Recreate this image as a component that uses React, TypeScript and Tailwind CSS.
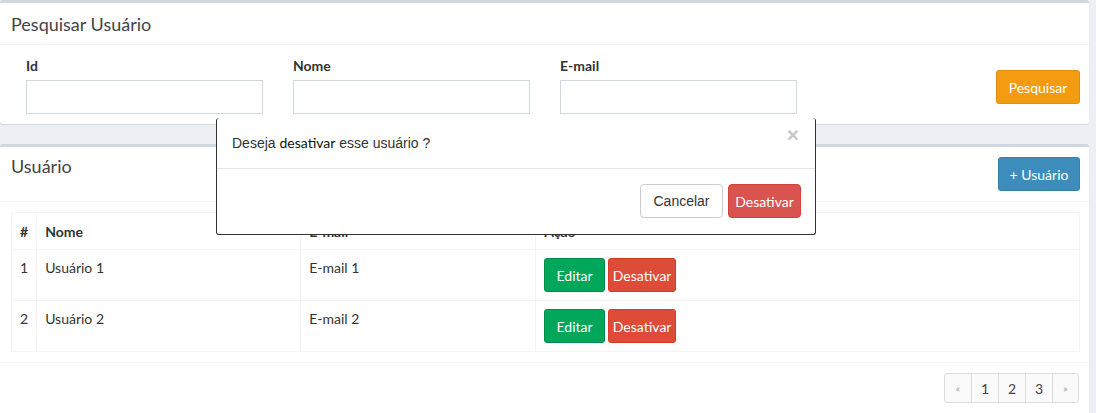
import React from 'react'

type User = {
  id: number
  nome: string
  email: string
}

const users: User[] = [
  { id: 1, nome: 'Usuário 1', email: 'E-mail 1' },
  { id: 2, nome: 'Usuário 2', email: 'E-mail 2' },
]

const sans = "font-['Lato','Noto_Sans',sans-serif]"
const arial = "font-['Liberation_Sans',Arial,sans-serif]"

function Field({ label }: { label: string }) {
  return (
    <div className="flex w-[237px] flex-col">
      <label className="mb-[4px] h-[20px] text-[14px] font-bold leading-[20px] text-[#333]">{label}</label>
      <input className="h-[34px] w-full border border-[#d2d6de] bg-white px-3 outline-none" />
    </div>
  )
}

export default function App() {
  return (
    <div className={`relative h-[413px] w-[1096px] overflow-hidden bg-[#ecf0f5] ${sans}`}>
      <div className="w-[1089px]">
        {/* pesquisa */}
        <div className="rounded-[3px] border-t-[3px] border-[#d2d6de] bg-white shadow-[0_1px_1px_rgba(0,0,0,0.1)]">
          <div className="flex h-[42px] items-center border-b border-[#f4f4f4] px-[11px]">
            <h3 className="text-[18px] leading-none text-[#444]">Pesquisar Usuário</h3>
          </div>
          <div className="flex h-[79px] items-start pl-[26px] pr-[9px] pt-[11px]">
            <div className="flex gap-[30px]">
              <Field label="Id" />
              <Field label="Nome" />
              <Field label="E-mail" />
            </div>
            <button className="ml-auto mt-[14px] h-[34px] w-[84px] rounded-[3px] border border-[#e08e0b] bg-[#f39c12] text-[14px] text-white">
              Pesquisar
            </button>
          </div>
        </div>

        {/* lista */}
        <div className="mt-[20px] rounded-[3px] border-t-[3px] border-[#d2d6de] bg-white shadow-[0_1px_1px_rgba(0,0,0,0.1)]">
          <div className="flex h-[55px] items-start border-b border-[#f4f4f4] pl-[11px] pr-[9px]">
            <h3 className="mt-[9px] text-[18px] leading-[20px] text-[#444]">Usuário</h3>
            <button className="ml-auto mt-[10px] h-[34px] w-[82px] rounded-[3px] border border-[#367fa9] bg-[#3c8dbc] text-[14px] text-white">
              + Usuário
            </button>
          </div>
          <div className="px-[11px] pb-[10px] pt-[10px]">
            <table className="w-[1069px] border-collapse border border-[#f4f4f4] text-[14px] text-[#333]">
              <thead>
                <tr className="h-[37px] text-left">
                  <th className="w-[25px] border border-[#f4f4f4] px-[8px] font-bold">#</th>
                  <th className="w-[264px] border border-[#f4f4f4] px-[8px] font-bold">Nome</th>
                  <th className="w-[235px] border border-[#f4f4f4] px-[8px] font-bold">E-mail</th>
                  <th className="border border-[#f4f4f4] px-[8px] font-bold">Ação</th>
                </tr>
              </thead>
              <tbody>
                {users.map((u) => (
                  <tr key={u.id} className="h-[51px]">
                    <td className="border border-[#f4f4f4] px-[8px] pt-[8px] align-top leading-[20px]">{u.id}</td>
                    <td className="border border-[#f4f4f4] px-[8px] pt-[8px] align-top leading-[20px]">{u.nome}</td>
                    <td className="border border-[#f4f4f4] px-[8px] pt-[8px] align-top leading-[20px]">{u.email}</td>
                    <td className="border border-[#f4f4f4] px-[8px] py-[8px] align-top">
                      <div className="flex gap-[3px]">
                        <button className="h-[34px] w-[61px] rounded-[3px] border border-[#008d4c] bg-[#00a65a] text-white">
                          Editar
                        </button>
                        <button className="h-[34px] w-[68px] rounded-[3px] border border-[#d73925] bg-[#dd4b39] text-white">
                          Desativar
                        </button>
                      </div>
                    </td>
                  </tr>
                ))}
              </tbody>
            </table>
          </div>
          <div className="flex h-[60px] items-start justify-end border-t border-[#f4f4f4] pr-[10px] pt-[10px]">
            <div className="flex h-[30px] overflow-hidden rounded-[3px] border border-[#ddd] bg-[#fafafa] text-[14px]">
              <span className="flex w-[26px] items-center justify-center text-[10px] text-[#999]">«</span>
              <span className="flex w-[27px] items-center justify-center border-l border-[#ddd] text-[#444]">1</span>
              <span className="flex w-[27px] items-center justify-center border-l border-[#ddd] text-[#444]">2</span>
              <span className="flex w-[27px] items-center justify-center border-l border-[#ddd] text-[#444]">3</span>
              <span className="flex w-[26px] items-center justify-center border-l border-[#ddd] text-[10px] text-[#999]">»</span>
            </div>
          </div>
        </div>
      </div>

      {/* modal */}
      <div className="absolute left-[216px] top-[118px] w-[600px] rounded-[3px] border-x border-b border-[#333] border-t-[#e5e5e5] bg-white">
        <div className="relative flex h-[51px] items-center border-b border-[#e5e5e5] px-[15px]">
          <p className={`text-[14px] text-[#333] ${arial}`}>
            Deseja <span className={`text-[#111] ${sans}`}>desativar</span> esse usuário ?
          </p>
          <span className={`absolute right-[16px] top-[6px] text-[21px] font-bold leading-[21px] text-[#c8c8c8] ${arial}`}>×</span>
        </div>
        <div className="flex h-[65px] items-start justify-end gap-[5px] pr-[14px] pt-[15px]">
          <button className={`h-[34px] w-[83px] rounded-[4px] border border-[#ccc] bg-white text-[14px] text-[#333] ${arial}`}>
            Cancelar
          </button>
          <button className="h-[34px] w-[73px] rounded-[4px] border border-[#d43f3a] bg-[#d9534f] text-[14px] text-white">
            Desativar
          </button>
        </div>
      </div>
    </div>
  )
}
